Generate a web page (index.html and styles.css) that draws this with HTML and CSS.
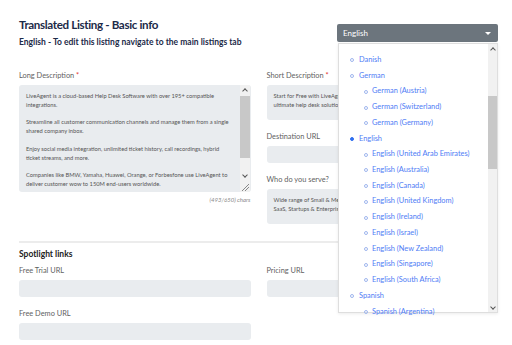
FILE: index.html
```html
<!DOCTYPE html>
<html>
<head>
<meta charset="utf-8">
<link rel="stylesheet" href="styles.css">
</head>
<body>
<div class="page">
  <header class="head">
    <div class="titles">
      <h1 class="title">Translated Listing - Basic info</h1>
      <p class="subtitle">English - To edit this listing navigate to the main listings tab</p>
    </div>
    <div class="select">
      <span>English</span>
      <span class="caret"></span>
    </div>
  </header>

  <section class="grid row1">
    <div class="col">
      <label class="label">Long Description <span class="req">*</span></label>
      <div class="area long">
        <div class="area-text nowrap">
          <p>LiveAgent is a cloud-based Help Desk Software with over 195+ compatible<br>integrations.</p>
          <p>Streamline all customer communication channels and manage them from a single<br>shared company inbox.</p>
          <p>Enjoy social media integration, unlimited ticket history, call recordings, hybrid<br>ticket streams, and more.</p>
          <p>Companies like BMW, Yamaha, Huawei, Orange, or Forbesfone use LiveAgent to<br>deliver customer wow to 150M end-users worldwide.</p>
        </div>
        <div class="vscroll">
          <span class="arr up"></span>
          <span class="thumb"></span>
          <span class="arr down"></span>
          <span class="grip"></span>
        </div>
      </div>
      <div class="chars">(493/650) chars</div>
    </div>
    <div class="col">
      <label class="label">Short Description <span class="req">*</span></label>
      <div class="area short">
        <div class="area-text nowrap"><p>Start for Free with LiveAgent and find out why it is the<br>ultimate help desk solution for your business.</p></div>
      </div>
      <label class="label gap">Destination URL</label>
      <div class="input"></div>
      <label class="label gap">Who do you serve?</label>
      <div class="area short">
        <div class="area-text nowrap"><p>Wide range of Small &amp; Medium businesses, agencies,<br>SaaS, Startups &amp; Enterprises</p></div>
      </div>
    </div>
  </section>

  <hr class="divider">
  <h2 class="section">Spotlight links</h2>

  <section class="grid row2">
    <div class="col">
      <label class="label">Free Trial URL</label>
      <div class="input"></div>
      <label class="label gap">Free Demo URL</label>
      <div class="input"></div>
    </div>
    <div class="col">
      <label class="label">Pricing URL</label>
      <div class="input"></div>
    </div>
  </section>

  <div class="dropdown">
    <ul class="opts">
      <li class="l1">Danish</li>
      <li class="l1">German</li>
      <li class="l2">German (Austria)</li>
      <li class="l2">German (Switzerland)</li>
      <li class="l2">German (Germany)</li>
      <li class="l1 sel">English</li>
      <li class="l2">English (United Arab Emirates)</li>
      <li class="l2">English (Australia)</li>
      <li class="l2">English (Canada)</li>
      <li class="l2">English (United Kingdom)</li>
      <li class="l2">English (Ireland)</li>
      <li class="l2">English (Israel)</li>
      <li class="l2">English (New Zealand)</li>
      <li class="l2">English (Singapore)</li>
      <li class="l2">English (South Africa)</li>
      <li class="l1">Spanish</li>
      <li class="l2">Spanish (Argentina)</li>
    </ul>
    <div class="dscroll">
      <span class="arr up"></span>
      <span class="thumb"></span>
      <span class="arr down"></span>
    </div>
  </div>
</div>
</body>
</html>
```

FILE: styles.css
```css
* { box-sizing: border-box; }
html, body { margin: 0; padding: 0; background: #fff; }
body { font-family: "Lato", "Open Sans", sans-serif; color: #555; }

.page { position: relative; width: 512px; height: 345px; overflow: hidden; padding: 16px 14px 0 19px; }

.head { display: flex; justify-content: space-between; align-items: flex-start; }
.title { margin: 0; font-size: 11.6px; line-height: 18px; font-weight: 700; color: #1c2a48; letter-spacing: -0.35px; }
.subtitle { margin: 2px 0 0; font-size: 8.5px; line-height: 12px; font-weight: 700; color: #1c2a48; }

.select { margin-top: 8px; width: 161px; height: 18px; background: #6c757d; border-radius: 2px; color: #fff; font-size: 8px; display: flex; align-items: center; justify-content: space-between; padding: 0 7px 0 6px; }
.caret { width: 0; height: 0; border-left: 3px solid transparent; border-right: 3px solid transparent; border-top: 3px solid #fff; }

.grid { display: grid; grid-template-columns: minmax(0, 1fr) minmax(0, 1fr); column-gap: 16px; }
.row1 { margin-top: 22px; }
.col { display: flex; flex-direction: column; min-width: 0; }

.label { font-size: 7.4px; line-height: 11px; color: #5f5f5f; margin-bottom: 4px; }
.label.gap { margin-top: 11px; }
.req { color: #e3342f; }

.area { background: #e9ecef; border-radius: 3px; display: flex; overflow: hidden; }
.area.long { height: 107px; }
.area.short { height: 35px; }
.area-text { flex: 1; min-width: 0; padding: 7px 3px 5px 7px; font-size: 5.75px; line-height: 8.8px; color: #555; }
.area-text.nowrap { white-space: nowrap; overflow: hidden; }
.area-text p { margin: 0 0 8.8px; }

.vscroll { position: relative; width: 10px; flex: none; background: #f1f1f1; margin-right: 1px; }
.vscroll .thumb { position: absolute; left: 0; right: 0; top: 11px; height: 62px; background: #c8c8c8; }
.arr { position: absolute; left: 2px; width: 5px; height: 5px; }
.arr::before { content: ""; position: absolute; left: 1px; width: 3px; height: 3px; border-left: 1px solid #555; border-top: 1px solid #555; transform: rotate(45deg); }
.arr.up { top: 3px; }
.arr.up::before { top: 1px; }
.vscroll .arr.down { top: 89px; }
.arr.down::before { top: -1px; transform: rotate(225deg); }
.grip { position: absolute; right: 1px; bottom: 1px; width: 7px; height: 7px; background: linear-gradient(135deg, transparent 45%, #888 45%, #888 52%, transparent 52%, transparent 68%, #888 68%, #888 75%, transparent 75%); }

.chars { text-align: right; font-size: 6px; line-height: 8px; color: #8a8a8a; margin-top: 4px; font-style: italic; }

.input { height: 17px; background: #e9ecef; border-radius: 3px; }

.divider { margin: 17px 0 0; border: 0; border-top: 2px solid #ececec; }
.section { margin: 5px 0 0; font-size: 8.5px; line-height: 12px; font-weight: 700; color: #222; }
.row2 { margin-top: 5px; }

.dropdown { position: absolute; left: 338px; top: 43px; width: 160px; height: 270px; background: #fff; border: 1px solid #dedede; display: flex; box-shadow: 0 1px 3px rgba(0,0,0,0.08); }
.opts { flex: 1; list-style: none; margin: 0; padding: 8px 0 0 0; font-size: 7.4px; color: #4f7df5; }
.opts li { position: relative; height: 15.72px; line-height: 15.72px; white-space: nowrap; }
.opts li::before { content: ""; position: absolute; top: 6.4px; border: 1px solid #9fb6ee; border-radius: 50%; box-sizing: content-box; width: 2px; height: 2px; }
.opts .l1 { padding-left: 20px; }
.opts .l1::before { left: 11px; }
.opts .l2 { padding-left: 33px; }
.opts .l2::before { left: 25px; }
.opts .sel::before { background: #2f6ff0; border-color: #2f6ff0; }

.dscroll { position: relative; width: 9px; flex: none; background: #f1f1f1; }
.dscroll .thumb { position: absolute; left: 0; right: 0; top: 52px; height: 73px; background: #c8c8c8; }
.dscroll .arr.up { left: 2px; top: 3px; }
.dscroll .arr.down { left: 2px; top: 262px; }
```
